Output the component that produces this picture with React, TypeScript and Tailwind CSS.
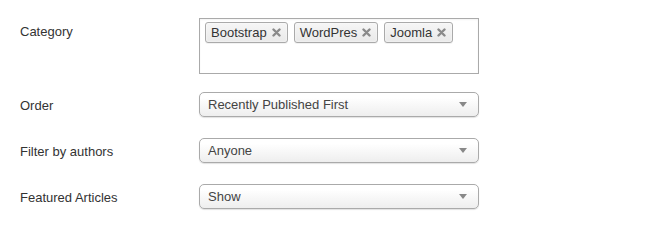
import React from 'react';

const tags = ['Bootstrap', 'WordPres', 'Joomla'];

const Tag: React.FC<{ label: string }> = ({ label }) => (
  <span className="flex items-center h-[21px] pl-[5px] pr-[6px] border border-[#aaaaaa] rounded-[3px] bg-gradient-to-b from-[#f6f6f6] to-[#e9e9e9] shadow-[0_0_2px_white_inset,0_1px_0_rgba(0,0,0,0.05)] text-[#333333]">
    <span>{label}</span>
    <svg width="9" height="9" viewBox="0 0 9 9" className="ml-[5px]">
      <path d="M1.5 1.5 L7.5 7.5 M7.5 1.5 L1.5 7.5" stroke="#8a8a8a" strokeWidth="2.4" strokeLinecap="round" />
    </svg>
  </span>
);

const Select: React.FC<{ value: string }> = ({ value }) => (
  <div className="flex items-center justify-between w-[280px] h-[25px] pl-[8px] pr-[11px] border border-[#aaaaaa] rounded-[5px] bg-gradient-to-b from-white from-20% to-[#eeeeee] shadow-[0_1px_1px_rgba(0,0,0,0.12)] text-[#444444]">
    <span>{value}</span>
    <svg width="8" height="5" viewBox="0 0 8 5">
      <path d="M0 0 L8 0 L4 5 Z" fill="#888888" />
    </svg>
  </div>
);

const Row: React.FC<{ label: string; className?: string; children: React.ReactNode }> = ({ label, className, children }) => (
  <div className={`flex ${className || ''}`}>
    <div className="w-[179px] shrink-0 pt-[2px]">{label}</div>
    {children}
  </div>
);

export default function App() {
  return (
    <div className="w-[650px] h-[243px] bg-white pl-[20px] pt-[18px] text-[13px] leading-[18px] text-[#333333] font-['Liberation_Sans',Arial,sans-serif]">
      <div className="flex">
        <div className="w-[179px] shrink-0 pt-[5px]">Category</div>
        <div className="w-[280px] h-[56px] border border-[#aaaaaa] bg-white shadow-[inset_0_1px_2px_rgba(0,0,0,0.05)] pt-[3px] pl-[5px] flex gap-[6px] items-start">
          {tags.map((t) => (
            <Tag key={t} label={t} />
          ))}
        </div>
      </div>
      <Row label="Order" className="mt-[18px] items-center">
        <Select value="Recently Published First" />
      </Row>
      <Row label="Filter by authors" className="mt-[21px] items-center">
        <Select value="Anyone" />
      </Row>
      <Row label="Featured Articles" className="mt-[21px] items-center">
        <Select value="Show" />
      </Row>
    </div>
  );
}
